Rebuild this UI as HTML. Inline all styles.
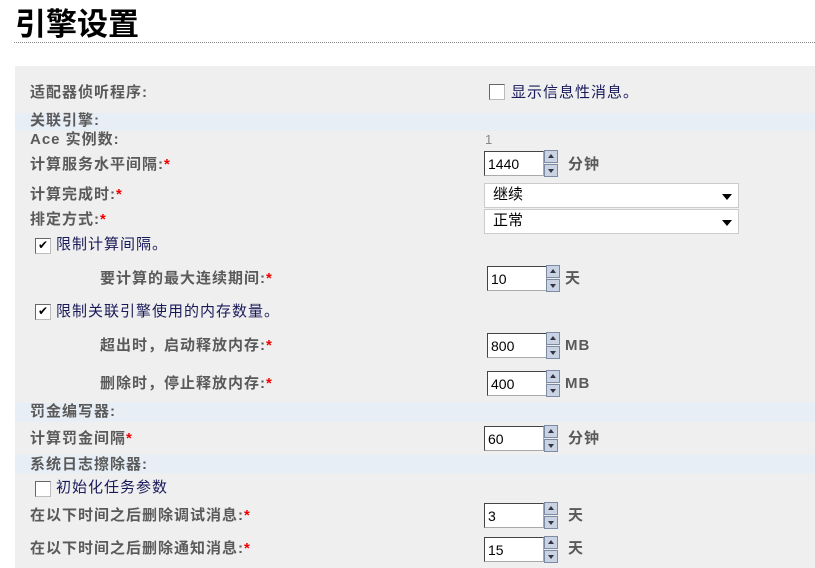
<!DOCTYPE html>
<html><head><meta charset="utf-8"><style>
*{margin:0;padding:0;box-sizing:border-box}
body{width:815px;height:568px;background:#fff;position:relative;overflow:hidden;font-family:"Liberation Sans","Noto Sans CJK SC",sans-serif;font-size:15px;color:#5a5a5a}
.a{position:absolute;white-space:nowrap;line-height:16px;letter-spacing:1px}
h1{position:absolute;left:15px;top:2px;font-size:31px;font-weight:bold;color:#000;font-family:"Noto Sans CJK SC","WenQuanYi Zen Hei",sans-serif;line-height:40px}
.hr{position:absolute;left:14px;top:42px;width:801px;border-top:1px dotted #888}
.panel{position:absolute;left:15px;top:66px;width:800px;height:502px;background:#efefef}
.band{position:absolute;left:15px;width:800px;background:#e8eef6}
.b{font-weight:bold}
.req{color:#e00;font-weight:bold}
.blue{color:#1a1a5a}
.in{position:absolute;width:60px;height:25px;background:#fff;border:1px solid #aaa;border-top-color:#444;border-left-color:#444;font-size:14px;color:#000;padding:3px 0 0 3px;line-height:18px}
.sp{position:absolute;width:14px;height:13px;background:#c9d3e3;border:1px solid #7d8aa3}
.sp::after{content:"";position:absolute;left:3px;border-left:3px solid transparent;border-right:3px solid transparent}
.up::after{top:3px;border-bottom:4px solid #334}
.dn::after{top:4px;border-top:4px solid #334}
.sel{position:absolute;left:484px;width:255px;height:25px;background:#fff;border:1px solid #ccc;color:#000;font-size:15px;padding:2px 0 0 8px;line-height:18px}
.sel::after{content:"";position:absolute;right:6px;top:10px;border-left:5px solid transparent;border-right:5px solid transparent;border-top:6px solid #000}
.cb{position:absolute;width:16px;height:16px;background:#fff;border:1px solid #666;border-right-color:#bbb;border-bottom-color:#bbb;font-size:12px;line-height:13px;text-align:center;color:#000}
</style></head><body>
<h1>引擎设置</h1>
<div class="hr"></div>
<div class="panel"></div>
<div class="band" style="top:113px;height:18px"></div>
<div class="band" style="top:403px;height:19px"></div>
<div class="band" style="top:455px;height:18px"></div>

<div class="a b" style="left:30px;top:85px">适配器侦听程序:</div>
<div class="cb" style="left:489px;top:84px"></div>
<div class="a blue" style="left:511px;top:85px">显示信息性消息。</div>

<div class="a b" style="left:30px;top:113px">关联引擎:</div>
<div class="a b" style="left:30px;top:132px">Ace 实例数:</div>
<div class="a" style="left:485px;top:132px;color:#888;font-size:13px">1</div>

<div class="a b" style="left:30px;top:157px">计算服务水平间隔:<span class="req">*</span></div>
<div class="in" style="left:484px;top:151px">1440</div>
<div class="sp up" style="left:544px;top:150px"></div><div class="sp dn" style="left:544px;top:164px"></div>
<div class="a b" style="left:568px;top:157px">分钟</div>

<div class="a b" style="left:30px;top:187px">计算完成时:<span class="req">*</span></div>
<div class="sel" style="top:183px">继续</div>
<div class="a b" style="left:30px;top:212px">排定方式:<span class="req">*</span></div>
<div class="sel" style="top:209px">正常</div>

<div class="cb" style="left:35px;top:238px">✔</div>
<div class="a blue" style="left:56px;top:237px">限制计算间隔。</div>
<div class="a b" style="left:100px;top:271px">要计算的最大连续期间:<span class="req">*</span></div>
<div class="in" style="left:487px;top:266px">10</div>
<div class="sp up" style="left:546px;top:265px"></div><div class="sp dn" style="left:546px;top:279px"></div>
<div class="a b" style="left:565px;top:271px">天</div>

<div class="cb" style="left:35px;top:304px">✔</div>
<div class="a blue" style="left:56px;top:304px">限制关联引擎使用的内存数量。</div>
<div class="a b" style="left:100px;top:338px">超出时，启动释放内存:<span class="req">*</span></div>
<div class="in" style="left:487px;top:333px">800</div>
<div class="sp up" style="left:546px;top:332px"></div><div class="sp dn" style="left:546px;top:346px"></div>
<div class="a b" style="left:565px;top:338px">MB</div>
<div class="a b" style="left:100px;top:376px">删除时，停止释放内存:<span class="req">*</span></div>
<div class="in" style="left:487px;top:371px">400</div>
<div class="sp up" style="left:546px;top:370px"></div><div class="sp dn" style="left:546px;top:384px"></div>
<div class="a b" style="left:565px;top:376px">MB</div>

<div class="a b" style="left:30px;top:404px">罚金编写器:</div>
<div class="a b" style="left:30px;top:431px">计算罚金间隔<span class="req">*</span></div>
<div class="in" style="left:484px;top:426px">60</div>
<div class="sp up" style="left:544px;top:425px"></div><div class="sp dn" style="left:544px;top:439px"></div>
<div class="a b" style="left:568px;top:431px">分钟</div>

<div class="a b" style="left:30px;top:457px">系统日志擦除器:</div>
<div class="cb" style="left:35px;top:481px"></div>
<div class="a blue" style="left:56px;top:480px">初始化任务参数</div>
<div class="a b" style="left:30px;top:508px">在以下时间之后删除调试消息:<span class="req">*</span></div>
<div class="in" style="left:484px;top:503px">3</div>
<div class="sp up" style="left:544px;top:502px"></div><div class="sp dn" style="left:544px;top:516px"></div>
<div class="a b" style="left:568px;top:508px">天</div>
<div class="a b" style="left:30px;top:541px">在以下时间之后删除通知消息:<span class="req">*</span></div>
<div class="in" style="left:484px;top:537px">15</div>
<div class="sp up" style="left:544px;top:536px"></div><div class="sp dn" style="left:544px;top:550px"></div>
<div class="a b" style="left:568px;top:541px">天</div>
</body></html>
